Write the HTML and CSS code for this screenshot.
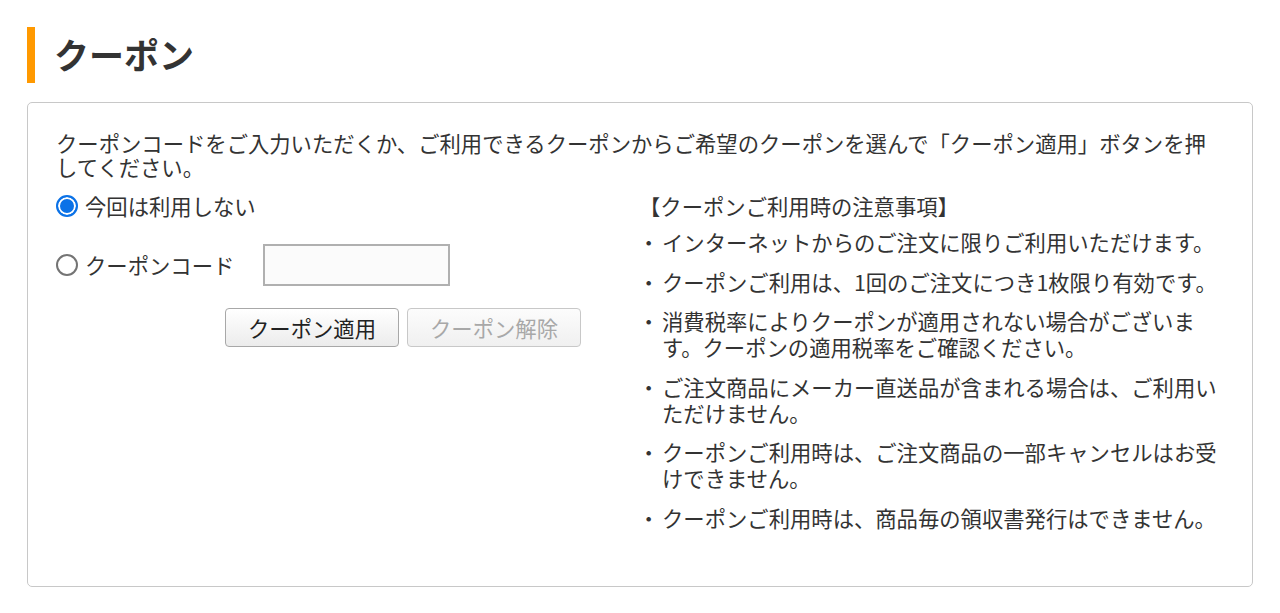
FILE: index.html
```html
<!DOCTYPE html>
<html lang="ja">
<head>
<meta charset="utf-8">
<title>クーポン</title>
<link rel="stylesheet" href="styles.css">
</head>
<body>
<div class="page">
  <h1 class="title">クーポン</h1>
  <section class="coupon-box">
    <p class="lead">クーポンコードをご入力いただくか、ご利用できるクーポンからご希望のクーポンを選んで「クーポン適用」ボタンを押してください。</p>
    <div class="columns">
      <div class="form-col">
        <label class="radio-row">
          <input type="radio" name="coupon" checked>
          <span>今回は利用しない</span>
        </label>
        <div class="code-row">
          <label class="radio-row">
            <input type="radio" name="coupon">
            <span>クーポンコード</span>
          </label>
          <input type="text" class="code-input">
        </div>
        <div class="buttons">
          <button type="button" class="btn">クーポン適用</button>
          <button type="button" class="btn" disabled>クーポン解除</button>
        </div>
      </div>
      <div class="notes-col">
        <p class="notes-head">【クーポンご利用時の注意事項】</p>
        <ul class="notes">
          <li><span class="dot">・</span><span>インターネットからのご注文に限りご利用いただけます。</span></li>
          <li><span class="dot">・</span><span>クーポンご利用は、1回のご注文につき1枚限り有効です。</span></li>
          <li><span class="dot">・</span><span>消費税率によりクーポンが適用されない場合がございます。クーポンの適用税率をご確認ください。</span></li>
          <li><span class="dot">・</span><span>ご注文商品にメーカー直送品が含まれる場合は、ご利用いただけません。</span></li>
          <li><span class="dot">・</span><span>クーポンご利用時は、ご注文商品の一部キャンセルはお受けできません。</span></li>
          <li><span class="dot">・</span><span>クーポンご利用時は、商品毎の領収書発行はできません。</span></li>
        </ul>
      </div>
    </div>
  </section>
</div>
</body>
</html>
```

FILE: styles.css
```css
* {
  box-sizing: border-box;
}

html, body {
  margin: 0;
  padding: 0;
  background: #fff;
}

body {
  font-family: "Noto Sans CJK JP", "Noto Sans", sans-serif;
  color: #333;
  font-size: 21.33px;
  line-height: 26px;
}

.page {
  padding: 27px 27px 0 27px;
}

.title {
  margin: 0;
  height: 56px;
  border-left: 8px solid #ff9900;
  padding-left: 19px;
  font-size: 35px;
  font-weight: 700;
  line-height: 54px;
  color: #333;
}

.coupon-box {
  margin-top: 19px;
  border: 1px solid #c8c8c8;
  border-radius: 5px;
  padding: 28px 28px 55px 28px;
}

.lead {
  margin: 0;
  line-height: 24px;
}

.columns {
  display: grid;
  grid-template-columns: 589px 1fr;
  margin-top: 14px;
}

.form-col {
  display: flex;
  flex-direction: column;
}

.radio-row {
  display: flex;
  align-items: center;
  gap: 7px;
  height: 26px;
}

.radio-row input {
  appearance: none;
  -webkit-appearance: none;
  width: 22px;
  height: 22px;
  margin: 0;
  flex: none;
  border-radius: 50%;
  border: 2px solid #747474;
  background: #fff;
}

.radio-row input:checked {
  border-color: #0b72e7;
  background: #0b72e7;
  box-shadow: inset 0 0 0 2px #fff;
}

.code-row {
  display: flex;
  align-items: center;
  margin-top: 25px;
}

.code-input {
  margin-left: 29px;
  width: 187px;
  height: 42px;
  border: 2px solid #b0b0b0;
  background: #fbfbfb;
  border-radius: 0;
  padding: 0 8px;
  font: inherit;
}

.buttons {
  display: flex;
  gap: 8px;
  margin-top: 22px;
  margin-left: 169px;
}

.btn {
  width: 174px;
  height: 39px;
  font-family: inherit;
  font-size: 21.33px;
  color: #222;
  background: linear-gradient(#ffffff, #ececec);
  border: 1px solid #a8a8a8;
  border-radius: 4px;
  padding: 0;
}

.btn:disabled {
  color: #a8a8a8;
  border-color: #c8c8c8;
  background: linear-gradient(#fcfcfc, #f0f0f0);
}

.notes-col {
  min-width: 0;
}

.notes-head {
  margin: 0 0 0 -6px;
}

.notes {
  list-style: none;
  margin: 10px 0 0 0;
  padding: 0;
}

.notes li {
  display: flex;
  margin-top: 13.6px;
}

.notes li:first-child {
  margin-top: 0;
}

.dot {
  flex: none;
  width: 24px;
  margin-left: -7px;
}
```
